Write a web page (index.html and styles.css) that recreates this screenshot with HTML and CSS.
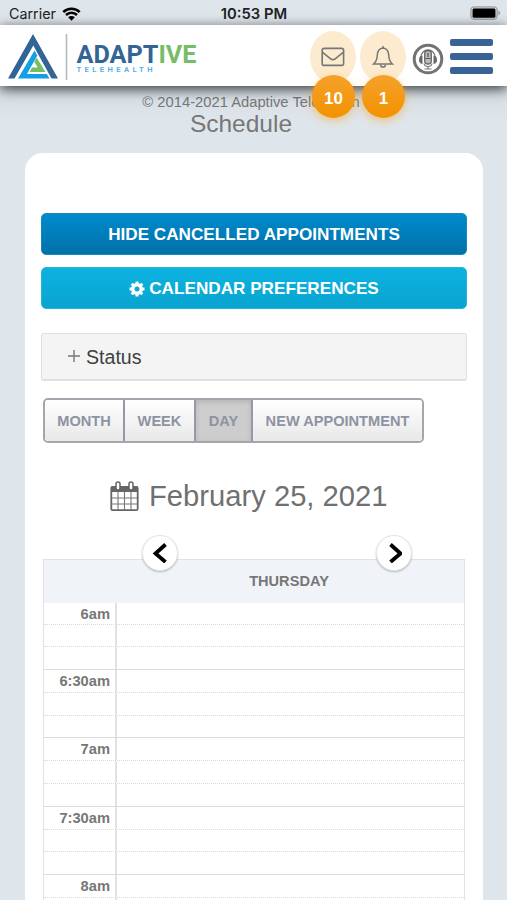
FILE: index.html
```
<!DOCTYPE html>
<html lang="en">
<head>
	<meta charset="UTF-8">
	<title>Schedule</title>
	<link rel="stylesheet" href="styles.css">
</head>
<body>
	<div class="status-bar">
		<div class="carrier">
			<span>Carrier</span>
			<svg width="19" height="14" viewBox="0 0 19 14">
				<path d="M1.3 5.2a11.6 11.6 0 0 1 16.4 0M4 8a7.8 7.8 0 0 1 11 0" fill="none" stroke="#000" stroke-width="2.5"/>
				<path d="M9.5 13.7 6.2 10.3a4.7 4.7 0 0 1 6.6 0z"/>
			</svg>
		</div>
		<div class="time">10:53 PM</div>
		<svg class="battery" width="31" height="15" viewBox="0 0 31 15">
			<rect x=".8" y=".8" width="26.4" height="12.6" rx="3.5" fill="#c5c9cc" stroke="#a2a5a8" stroke-width="1.3"/>
			<rect x="2.6" y="2.4" width="22.8" height="9.4" rx="1.5"/>
			<path d="M28.3 4.6q2 .8 2 2.5t-2 2.5z" fill="#a2a5a8"/>
		</svg>
	</div>
	<header class="header">
		<svg class="logo" width="200" height="60" viewBox="0 0 200 60">
			<path d="M33 9 8 53.500h6.500L33.300 20.500 51.500 53.500H58z" fill="#336496"/>
			<path d="M34.500 25.500 18 53.500h31.500L46.800 49H27l10.300-18.500z" fill="#159fe3"/>
			<path d="M36.600 32.500 45.500 47H29.500l2.500-4.500h5.800l-3.600-5.800z" fill="#76bd67"/>
			<path d="M66.500 9v46" stroke="#b5b8ba" stroke-width="1.6"/>
			<text class="logo-name" x="76.5" y="38" textLength="120" lengthAdjust="spacingAndGlyphs">ADAPT<tspan>IVE</tspan></text>
			<text class="logo-sub" x="76.5" y="47" textLength="76">TELEHEALTH</text>
		</svg>
		<div class="actions">
			<div class="action">
				<svg width="24" height="20" viewBox="0 0 24 20" fill="none" stroke="#777" stroke-width="1.6">
					<rect x="1.2" y="1.4" width="21.4" height="17" rx="2"/>
					<path d="m1.3 5.2 8 6.5q2.6 2 5.2 0l8-6.5"/>
				</svg>
				<span class="badge">10</span>
			</div>
			<div class="action">
				<svg width="22" height="24" viewBox="0 0 22 24" fill="none" stroke="#777" stroke-width="1.5">
					<path d="M11 2.9C6.5 3.2 5.5 7 5.3 10c-.2 4.5-1.2 7-3.8 9h19c-2.6-2-3.6-4.5-3.8-9C16.5 7 15.5 3.2 11 2.9z"/>
					<path d="M8.6 19.5a2.4 2.6 0 0 0 4.8 0M11 1v2"/>
				</svg>
				<span class="badge">1</span>
			</div>
		</div>
		<svg class="mic" width="32" height="32" viewBox="0 0 32 32">
			<circle cx="16" cy="16" r="13.8" fill="#fff" stroke="#737373" stroke-width="3"/>
			<path d="M9 15v-1a7 7 0 0 1 14 0v1" fill="none" stroke="#777" stroke-width="1.3"/>
			<path d="M10.500 12.500v8.500q-3.500-.5-3.500-4.300t3.500-4.200zM21.500 12.500v8.500q3.500-.5 3.500-4.300t-3.500-4.200z" fill="#666"/>
			<rect x="12.700" y="7.500" width="6.600" height="13.500" rx="3.300" fill="#bbb" stroke="#666" stroke-width="1.300"/>
			<path d="M16 10v4M13.500 15.500h5" stroke="#555" stroke-width="1.200"/>
			<path d="M12 20.500q.5 3 4 3t4-3M16 23v3M12.500 26h7" fill="none" stroke="#777" stroke-width="1.200"/>
		</svg>
		<div class="burger"><i></i><i></i><i></i></div>
	</header>
	<div class="page-title">
		<p>© 2014-2021 Adaptive Telehealth</p>
		<h1>Schedule</h1>
	</div>
	<main class="card">
		<button class="btn btn-primary">HIDE CANCELLED APPOINTMENTS</button>
		<button class="btn btn-info">
			<svg width="16" height="16" viewBox="0 0 16 16">
				<circle cx="8" cy="8" r="4.2" fill="none" stroke="#fff" stroke-width="3.4"/>
				<path d="M8 .5v3M8 12.5v3M.5 8h3M12.5 8h3M2.7 2.7l2.100 2.100M11.200 11.200l2.100 2.100M2.700 13.300l2.100-2.100M11.200 4.800l2.100-2.100" stroke="#fff" stroke-width="3"/>
			</svg>
			CALENDAR PREFERENCES
		</button>
		<div class="panel">
			<svg width="12" height="12" viewBox="0 0 12 12"><path d="M6 0v12M0 6h12" stroke="#777" stroke-width="1.4"/></svg>
			<span>Status</span>
		</div>
		<div class="views">
			<button>MONTH</button>
			<button>WEEK</button>
			<button class="active">DAY</button>
			<button>NEW APPOINTMENT</button>
		</div>
		<h2 class="date">
			<svg width="29" height="31" viewBox="0 0 29 31">
				<path d="M1 5.5h27V11H1z" fill="#666"/>
				<rect x="1.3" y="5.8" width="26.4" height="23.4" rx="1.5" fill="none" stroke="#666" stroke-width="1.8"/>
				<path d="M8 11v18M14.5 11v18M21 11v18M2 17h25M2 23h25" stroke="#777" stroke-width="1.1"/>
				<rect x="6" y="1" width="4" height="8" rx="2" fill="#fff" stroke="#666" stroke-width="1.5"/>
				<rect x="19" y="1" width="4" height="8" rx="2" fill="#fff" stroke="#666" stroke-width="1.5"/>
			</svg>
			<span>February 25, 2021</span>
		</h2>
		<div class="calendar">
			<button class="nav prev">
				<svg width="16" height="20" viewBox="0 0 16 20"><path d="M13.500 1.500 3.500 10.500l10 8.500" fill="none" stroke="#000" stroke-width="3.800"/></svg>
			</button>
			<button class="nav next">
				<svg width="16" height="20" viewBox="0 0 16 20"><path d="m4.500 1.500 10 9-10 8.500" fill="none" stroke="#000" stroke-width="3.800"/></svg>
			</button>
			<div class="day-head"><span></span><b>THURSDAY</b></div>
			<div class="slot"><b>6am</b><span></span></div>
			<div class="slot minor"><b></b><span></span></div>
			<div class="slot minor"><b></b><span></span></div>
			<div class="slot"><b>6:30am</b><span></span></div>
			<div class="slot minor"><b></b><span></span></div>
			<div class="slot minor"><b></b><span></span></div>
			<div class="slot"><b>7am</b><span></span></div>
			<div class="slot minor"><b></b><span></span></div>
			<div class="slot minor"><b></b><span></span></div>
			<div class="slot"><b>7:30am</b><span></span></div>
			<div class="slot minor"><b></b><span></span></div>
			<div class="slot minor"><b></b><span></span></div>
			<div class="slot"><b>8am</b><span></span></div>
			<div class="slot minor"><b></b><span></span></div>
		</div>
	</main>
</body>
</html>
```
FILE: styles.css
```
* { margin: 0; padding: 0; box-sizing: border-box; }
body {
	height: 900px;
	overflow: hidden;
	background: #dee6ec;
	font-family: "Liberation Sans", Arial, sans-serif;
	color: #777;
	display: flex;
	flex-direction: column;
}
svg { display: block; flex: none; }
button { font-family: inherit; }
.status-bar {
	height: 25px;
	flex: none;
	display: grid;
	grid-template-columns: 1fr auto 1fr;
	align-items: center;
	padding: 2px 6px 0 9px;
	font: 14.3px Inter, sans-serif;
	color: #222;
}
.carrier {
	display: flex;
	align-items: center;
	gap: 6px;
}
.time {
	font-weight: 600;
	font-size: 14.8px;
	margin-left: -2px;
}
.battery { justify-self: end; }
.header {
	height: 61px;
	flex: none;
	background: #fff;
	box-shadow: 0 3px 12px rgba(0,0,0,.75);
	display: flex;
	position: relative;
	z-index: 2;
}
.logo-name {
	font: bold 26.5px Roboto, sans-serif;
	fill: #336496;
}
.logo-name tspan { fill: #76bd67; }
.logo-sub {
	font: bold 7.5px Roboto, sans-serif;
	fill: #4fb4ea;
}
.actions {
	display: flex;
	gap: 4px;
	margin: 6px 0 0 110px;
}
.action {
	width: 46px;
	height: 52px;
	border-radius: 50%;
	background: #fdebcf;
	display: flex;
	align-items: center;
	justify-content: center;
	position: relative;
}
.badge {
	position: absolute;
	left: 2px;
	top: 44px;
	width: 43px;
	height: 43px;
	border-radius: 50%;
	background: linear-gradient(#f5a12a, #f39200);
	box-shadow: 0 3px 10px rgba(250,165,40,.55);
	color: #fff;
	font: bold 17px/48px "Liberation Sans", Arial, sans-serif;
	text-align: center;
}
.mic { margin: 18px 0 0 6px; }
.burger {
	width: 43px;
	margin: 14px 0 0 6px;
	display: flex;
	flex-direction: column;
	gap: 7px;
}
.burger i {
	height: 7px;
	border-radius: 2px;
	background: #386397;
}
.page-title {
	height: 67px;
	flex: none;
	text-align: center;
	padding: 8px 0 0 0;
	background: linear-gradient(rgba(0,0,0,.04), transparent 36px);
}
.page-title p {
	font-size: 14.75px;
	line-height: 17px;
	padding-right: 5px;
}
.page-title h1 {
	font-size: 24.5px;
	font-weight: normal;
	line-height: 25px;
	padding-right: 25px;
}
.card {
	flex: 1;
	width: 458px;
	margin-left: 25px;
	padding: 60px 16px 0;
	background: #fff;
	border-radius: 18px 18px 0 0;
}
.btn {
	width: 426px;
	height: 42px;
	margin-bottom: 12px;
	padding-top: 1px;
	border: 1px solid;
	border-radius: 5px;
	display: flex;
	align-items: center;
	justify-content: center;
	gap: 4px;
	color: #fff;
	font-size: 17.15px;
	font-weight: bold;
}
.btn-primary {
	background: linear-gradient(#008bcd, #0070a8);
	border-color: #1788bd;
}
.btn-info {
	background: linear-gradient(#0cb2e1, #09a4d0);
	border-color: #25b4da;
}
.panel {
	width: 426px;
	height: 48px;
	margin-top: 24px;
	padding-left: 26px;
	border: 1px solid #e0e0e0;
	border-bottom-width: 2px;
	border-radius: 3px;
	background: #f4f4f4;
	display: flex;
	align-items: center;
	gap: 6px;
	font-size: 19.6px;
	color: #404040;
}
.panel svg { margin-top: -2px; }
.panel span { padding-top: 2px; }
.views {
	display: flex;
	width: 381px;
	height: 45px;
	margin: 17px 0 0 2px;
	border: 2px solid #a3a6ac;
	border-radius: 5px;
	overflow: hidden;
}
.views button {
	flex: none;
	width: 71px;
	border: 0;
	border-right: 2px solid #9398ab;
	background: linear-gradient(#fff, #e8e8e8);
	font-size: 14.6px;
	font-weight: bold;
	color: #8d93a2;
}
.views button:first-child { width: 80px; }
.views .active {
	width: 57px;
	background: #cdcdcd;
	box-shadow: inset 0 2px 5px rgba(0,0,0,.12);
}
.views button:last-child {
	flex: 1;
	border-right: 0;
}
.date {
	display: flex;
	align-items: center;
	height: 34px;
	margin: 36px 0 0 69px;
	gap: 10px;
	font-size: 29.2px;
	font-weight: normal;
	color: #707070;
}
.calendar {
	position: relative;
	width: 422px;
	margin: 46px 0 0 2px;
	border: 1px solid #e0e2e4;
}
.nav {
	position: absolute;
	top: -25px;
	width: 36px;
	height: 36px;
	border: 1px solid #e6e6e6;
	border-radius: 50%;
	background: #fff;
	box-shadow: 0 1px 2px rgba(0,0,0,.25);
	display: flex;
	align-items: center;
	justify-content: center;
}
.prev { left: 98px; }
.next { left: 332px; }
.day-head {
	height: 42px;
	background: #f0f4f8;
	display: grid;
	grid-template-columns: 70px 1fr;
	align-items: center;
	text-align: center;
	font-size: 14.6px;
}
.slot {
	height: 22.8px;
	display: grid;
	grid-template-columns: 73px 1fr;
	border-top: 1px solid #dcdcdc;
	font-size: 14.7px;
	line-height: 22px;
}
.day-head + .slot {
	height: 21.5px;
	border-top-color: #f0f4f8;
}
.slot.minor { border-top: 1px dotted #d8d8d8; }
.slot b {
	text-align: right;
	padding-right: 5px;
	border-right: 2px solid #e2e2e2;
}
```
